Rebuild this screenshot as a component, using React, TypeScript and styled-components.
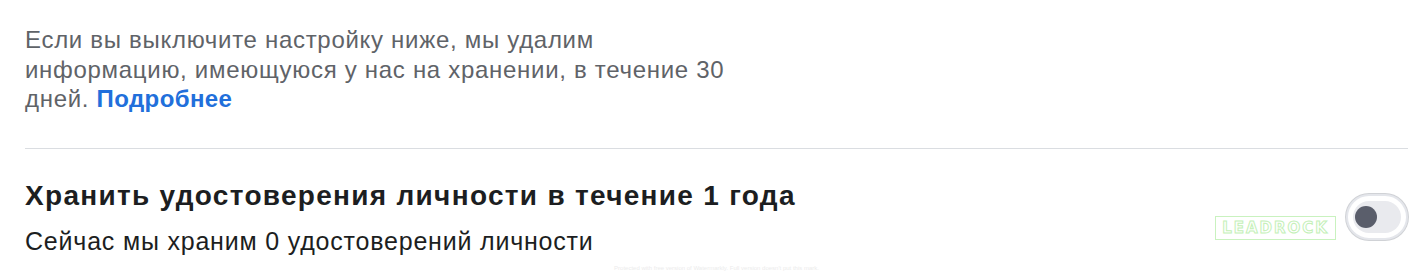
import styled, { createGlobalStyle } from 'styled-components';

const GlobalStyle = createGlobalStyle`
  html, body {
    margin: 0;
    padding: 0;
    background: #fff;
  }
  body {
    font-family: 'Liberation Sans', Arial, sans-serif;
  }
`;

const Page = styled.div`
  height: 279px;
  overflow: hidden;
  padding: 25px 10px 0 25px;
  box-sizing: border-box;
`;

const Intro = styled.p`
  color: #5f6368;
  font-size: 24px;
  letter-spacing: 0.7px;
  line-height: 29.5px;
  margin: 0;
  max-width: 715px;
`;

const MoreLink = styled.a`
  color: #216fdb;
  font-weight: bold;
  letter-spacing: 0.4px;
  text-decoration: none;
  cursor: pointer;
`;

const Divider = styled.hr`
  border: 0;
  border-top: 1px solid #dadde1;
  margin: 34px 0 0;
`;

const SettingRow = styled.div`
  align-items: center;
  display: flex;
  justify-content: space-between;
  padding-top: 30px;
`;

const SettingText = styled.div`
  display: flex;
  flex-direction: column;
`;

const Title = styled.h3`
  color: #1c1e21;
  font-size: 28px;
  font-weight: bold;
  letter-spacing: 1.3px;
  line-height: 34px;
  margin: 0;
`;

const Subtitle = styled.p`
  color: #1c1e21;
  font-size: 25px;
  letter-spacing: 0.8px;
  line-height: 30px;
  margin: 13px 0 0;
`;

const Controls = styled.div`
  align-items: center;
  display: flex;
  gap: 10px;
`;

const Stamp = styled.span`
  border: 1.5px solid #c9f2bf;
  color: #fff;
  font-family: 'DejaVu Sans', sans-serif;
  font-size: 15px;
  font-weight: bold;
  letter-spacing: 2px;
  padding: 2px 6px;
  -webkit-text-stroke: 1px #c4f0b8;
  margin-top: 22px;
`;

const Switch = styled.button<{ $on: boolean }>`
  background: #fff;
  border: 2px solid #e4e6eb;
  border-radius: 24px;
  box-shadow: 0 0 0 1px #d0d2d6;
  cursor: pointer;
  height: 46px;
  padding: 5px;
  width: 62px;
  display: flex;
  align-items: stretch;
`;

const Track = styled.span<{ $on: boolean }>`
  background: ${(p) => (p.$on ? '#1877f2' : '#e9eaee')};
  border-radius: 18px;
  display: flex;
  align-items: center;
  justify-content: ${(p) => (p.$on ? 'flex-end' : 'flex-start')};
  flex: 1;
  padding: 0 2px;
`;

const Knob = styled.span`
  background: #5a5e6b;
  border-radius: 50%;
  display: block;
  height: 22px;
  width: 22px;
`;

const Footnote = styled.div`
  color: #ececec;
  font-size: 6px;
  text-align: center;
  margin-top: 9px;
`;

export default function App() {
  const enabled = false;
  return (
    <>
      <GlobalStyle />
      <Page>
        <Intro>
          Если вы выключите настройку ниже, мы удалим информацию, имеющуюся у нас на хранении, в
          течение 30 дней. <MoreLink>Подробнее</MoreLink>
        </Intro>
        <Divider />
        <SettingRow>
          <SettingText>
            <Title>Хранить удостоверения личности в течение 1 года</Title>
            <Subtitle>Сейчас мы храним 0 удостоверений личности</Subtitle>
          </SettingText>
          <Controls>
            <Stamp>LEADROCK</Stamp>
            <Switch $on={enabled} aria-label="toggle">
              <Track $on={enabled}>
                <Knob />
              </Track>
            </Switch>
          </Controls>
        </SettingRow>
        <Footnote>Protected with free version of Watermarkly. Full version doesn't put this mark.</Footnote>
      </Page>
    </>
  );
}
